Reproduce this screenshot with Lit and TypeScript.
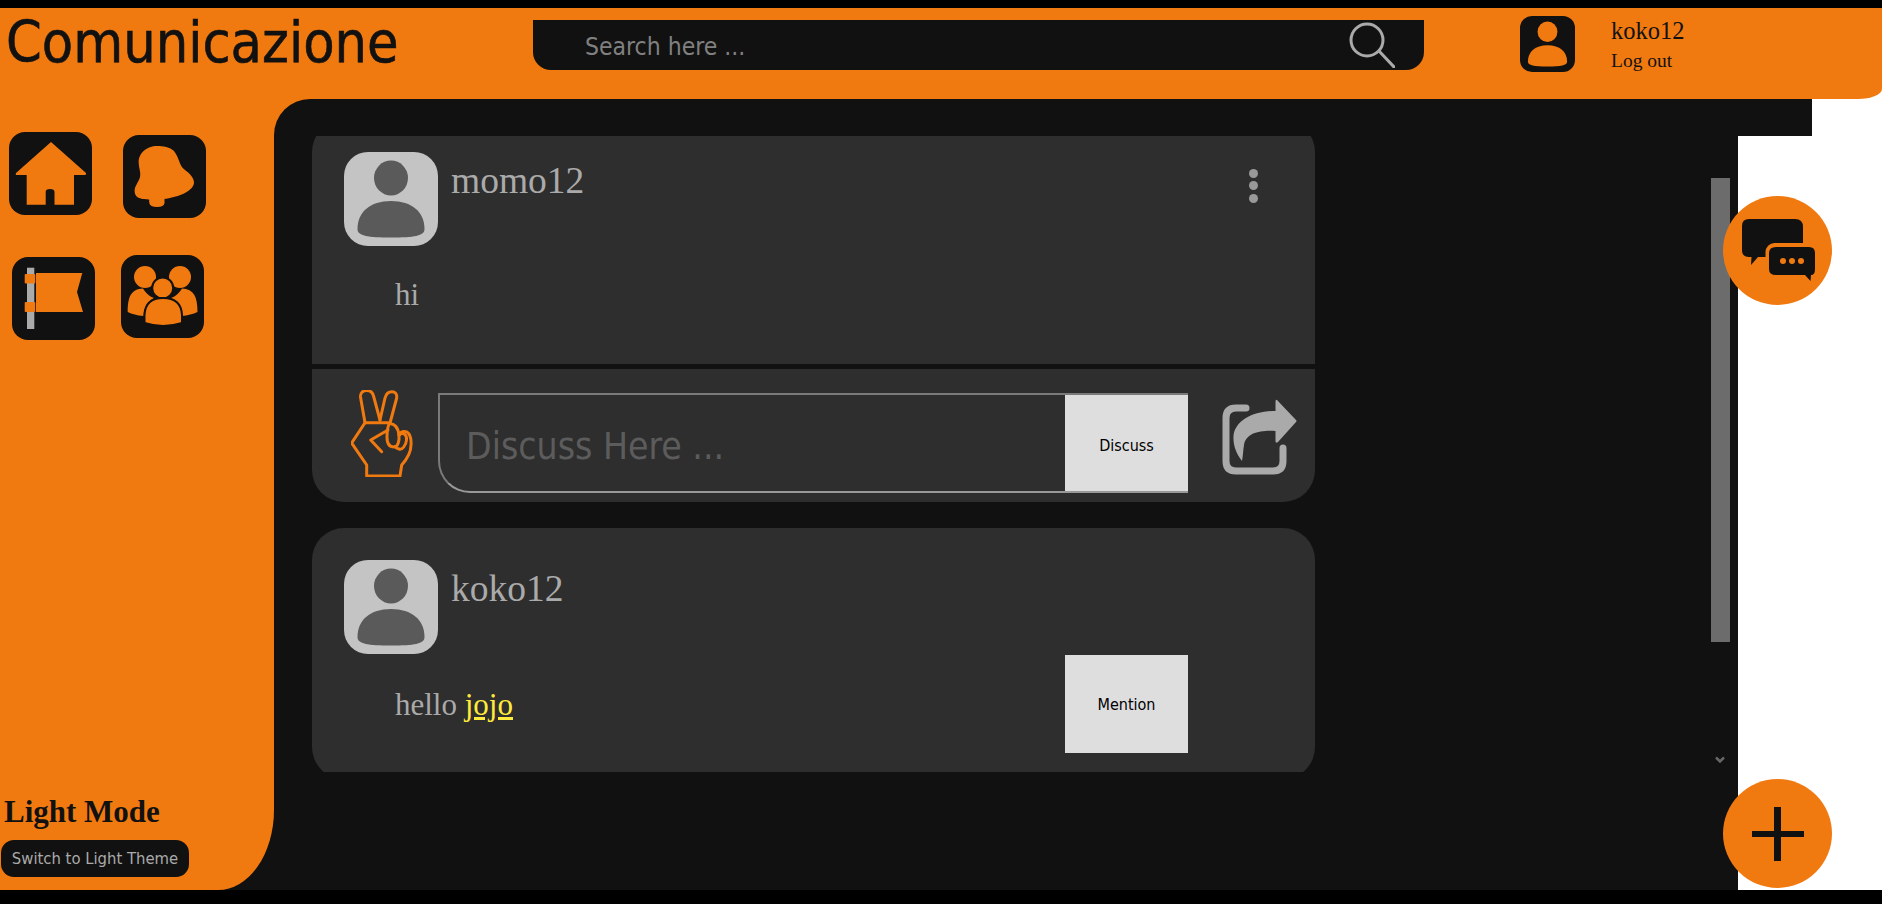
import { LitElement, html, css } from 'lit';
import { customElement } from 'lit/decorators.js';

const person = html`<svg class="person" viewBox="0 0 94 94">
  <ellipse cx="47" cy="26" rx="17" ry="17.5"></ellipse>
  <path d="M13.5 77C13.5 60 26 49 47 49S80.5 60 80.5 77C80.5 84 70 85.5 47 85.5S13.5 84 13.5 77Z"></path>
</svg>`;

const navIcons = {
  home: html`<svg viewBox="0 0 83 83"><path d="M42 10L77 41Q77.500 43 75 43H65V72.700H45.500V60Q45.500 57 41 57T36.700 60V72.700H17.700V43H8Q6 43 7 41Z"></path></svg>`,
  bell: html`<svg viewBox="0 0 83 83">
    <path d="M34 11C24 11 15 18 15.700 28C16 34 18 37 17 42C16 47 11 51 11.700 57C12 62 17 64 21 64C30 65 40 64.500 47 63C57 61 70 56 71 48C71.500 43 66 38 62 35C56 31 57 24 51 16C47 12 40 11 34 11Z"></path>
    <path d="M26 63H41.500V68Q41 72 34 72T26.300 68Z"></path>
  </svg>`,
  flag: html`<svg viewBox="0 0 83 83">
    <rect class="pole" x="15" y="10.700" width="7.300" height="61.300"></rect>
    <path d="M24 16H70.300L65 35L71 55H24Z"></path>
    <rect x="12.700" y="17" width="10.600" height="9.500" rx="1"></rect>
    <rect x="12.700" y="45" width="10.600" height="10" rx="1"></rect>
  </svg>`,
  group: html`<svg viewBox="0 0 83 83">
    <circle cx="24" cy="22" r="11"></circle>
    <circle cx="59" cy="22" r="11"></circle>
    <path d="M6.700 57C6.700 42 10 34 22 33.500C26 40 30 42 33 43C26 47 23 52 22.500 61C16 60.500 11 59 6.700 57Z"></path>
    <path d="M76.500 57C76.500 42 73 34 61 33.500C57 40 53 42 50 43C57 47 60 52 60.500 61C67 60.500 72 59 76.500 57Z"></path>
    <circle class="ring" cx="41.700" cy="33" r="10.500"></circle>
    <path class="ring" d="M23.500 60C24 49 30 43 42 43S60.500 49 61 60V68Q42 74 23.500 68Z"></path>
  </svg>`,
};

const posts = [
  { user: 'momo12', first: true },
  { user: 'koko12', first: false },
];

@customElement('app-root')
export class AppRoot extends LitElement {
  static styles = css`
    :host {
      display: flex;
      flex-direction: column;
      position: relative;
      height: 100vh;
      overflow: hidden;
      background: #fff;
      --orange: #f17a10;
      --dark: #111;
      --card: #2e2e2e;
      --sans: 'DejaVu Sans', sans-serif;
      font-family: 'Liberation Serif', serif;
    }

    :host * {
      box-sizing: border-box;
    }

    .edge-top {
      height: 8px;
      flex: none;
      background: #000;
    }

    .edge-bottom {
      height: 14px;
      flex: none;
      background: #000;
    }

    header {
      height: 91px;
      flex: none;
      display: flex;
      align-items: flex-start;
      padding-left: 6px;
      background: var(--orange);
      border-bottom-right-radius: 24px 10px;
    }

    h1 {
      width: 527px;
      margin: 0;
      font: 400 57px/69px var(--sans);
      font-stretch: condensed;
      -webkit-text-stroke: 0.6px var(--dark);
      color: var(--dark);
    }

    .search {
      width: 891px;
      height: 50px;
      margin-top: 12px;
      display: flex;
      align-items: center;
      padding: 0 29px 0 52px;
      background: var(--dark);
      border-radius: 0 0 18px 18px;
    }

    .search input {
      flex: 1;
      min-width: 0;
      height: 100%;
      border: 0;
      padding: 2px 0 0;
      outline: 0;
      background: none;
      font: 400 24.500px var(--sans);
      font-stretch: condensed;
      color: #aaa;
    }

    .search input::placeholder {
      color: #808080;
      opacity: 1;
    }

    .search svg {
      width: 46px;
      height: 46px;
      fill: none;
      stroke: #aaa;
      stroke-width: 3;
      stroke-linecap: round;
    }

    .me {
      width: 55px;
      height: 56px;
      margin: 8px 0 0 96px;
      border-radius: 12px;
      background: var(--dark);
      fill: var(--orange);
    }

    .person {
      display: block;
      width: 100%;
      height: 100%;
    }

    .who {
      margin: 9px 0 0 36px;
      color: var(--dark);
    }

    .who div {
      font-size: 24.500px;
      line-height: 28px;
    }

    .who a {
      display: block;
      margin-top: 5px;
      font-size: 19.500px;
      line-height: 22px;
    }

    .shell {
      flex: 1;
      min-height: 0;
      display: flex;
    }

    .side-wrap {
      width: 274px;
      flex: none;
      background: var(--dark);
    }

    .side {
      height: 100%;
      display: flex;
      flex-direction: column;
      justify-content: space-between;
      padding: 33px 0 13px 1px;
      background: var(--orange);
      border-bottom-right-radius: 56px 80px;
    }

    nav {
      display: grid;
      grid-template-columns: 83px 83px;
      column-gap: 31px;
      row-gap: 37px;
      padding-left: 8px;
    }

    .tile {
      width: 83px;
      height: 83px;
      border-radius: 16px;
      background: var(--dark);
      fill: var(--orange);
    }

    .tile svg {
      display: block;
    }

    .tile.bell {
      margin-top: 3px;
    }

    .tile.flag {
      margin: 2px 0 0 3px;
    }

    .tile.group {
      margin-left: -2px;
    }

    .pole {
      fill: #aaa;
    }

    .ring {
      stroke: var(--dark);
      stroke-width: 2;
    }

    h2 {
      margin: 0 0 10px 3px;
      font-size: 31px;
      line-height: 36px;
      color: var(--dark);
    }

    .theme {
      display: block;
      width: 188px;
      height: 37px;
      padding: 0;
      border: 0;
      border-radius: 13px;
      background: var(--dark);
      color: #aaa;
      font: 400 16.500px var(--sans);
      font-stretch: condensed;
    }

    .main {
      width: 1464px;
      flex: none;
      display: flex;
      flex-direction: column;
      background: linear-gradient(var(--orange) 37px, var(--dark) 37px);
    }

    .strip {
      width: 1538px;
      height: 37px;
      flex: none;
      background: var(--dark);
      border-top-left-radius: 36px;
    }

    .feed {
      flex: 1;
      min-height: 0;
      display: flex;
      justify-content: space-between;
      padding: 0 8px 0 38px;
      background: var(--dark);
    }

    .cards {
      width: 1003px;
      height: 636px;
      overflow: hidden;
    }

    .card {
      margin-bottom: 26px;
      background: var(--card);
      border-radius: 32px;
      color: #aaa;
    }

    .card:first-child {
      margin-top: -16px;
    }

    .head {
      position: relative;
      display: flex;
      gap: 13px;
      padding: 31.500px 32px 0;
    }

    .card:last-child .head {
      padding-top: 32.500px;
    }

    .avatar {
      width: 94px;
      height: 94px;
      border-radius: 24px;
      background: #c4c4c4;
      fill: #5a5a5a;
    }

    .name {
      margin-top: 7px;
      font-size: 37.500px;
      line-height: 43px;
    }

    .more {
      margin-left: auto;
      margin-right: 25px;
      padding-top: 17px;
      display: flex;
      flex-direction: column;
      gap: 3.500px;
    }

    .more i {
      width: 9px;
      height: 9px;
      border-radius: 50%;
      background: #999;
    }

    .body {
      display: flex;
      justify-content: space-between;
      min-height: 118px;
      padding: 0 127px 0 83px;
      font-size: 31px;
      line-height: 36px;
    }

    .card:last-child .body {
      min-height: 125px;
    }

    .body p {
      margin: 31px 0 0;
    }

    .card:last-child .body p {
      margin-top: 33px;
    }

    .body a {
      color: #ffeb3b;
      text-decoration: underline;
    }

    .square {
      width: 123px;
      flex: none;
      padding: 0;
      border: 0;
      background: #dedede;
      color: #000;
      font: 400 16px var(--sans);
      font-stretch: condensed;
    }

    .body .square {
      height: 98px;
      margin-top: 1px;
    }

    .actions {
      display: flex;
      align-items: flex-start;
      height: 138px;
      padding: 21px 0 0 39px;
      border-top: 5px solid var(--dark);
    }

    .peace {
      width: 62px;
      height: 87px;
      flex: none;
      fill: none;
      stroke: var(--orange);
      stroke-width: 3;
      stroke-linecap: round;
      stroke-linejoin: round;
    }

    .discuss {
      width: 750px;
      height: 100px;
      margin: 3px 0 0 25px;
      flex: none;
      display: flex;
      border: 2px solid #7a7a7a;
      border-bottom-color: #999;
      border-right: 0;
      border-bottom-left-radius: 32px;
    }

    .discuss input {
      flex: 1;
      min-width: 0;
      padding: 8px 0 0 26px;
      border: 0;
      outline: 0;
      background: none;
      color: #aaa;
      font: 400 37px var(--sans);
      font-stretch: condensed;
    }

    .discuss input::placeholder {
      color: #5c5c5c;
      opacity: 1;
    }

    .discuss .square {
      padding-top: 6px;
    }

    .share {
      width: 75px;
      height: 76px;
      flex: none;
      margin: 9px 0 0 34px;
    }

    .share .arrow {
      fill: #aaa;
    }

    .share .frame {
      fill: none;
      stroke: #aaa;
      stroke-width: 7;
      stroke-linecap: round;
    }

    .rail {
      width: 19px;
      flex: none;
      padding-top: 42px;
    }

    .thumb {
      height: 464px;
      background: #6c6c6c;
    }

    .chevron {
      display: block;
      width: 10px;
      height: 8px;
      margin: 114px 0 0 4px;
      fill: none;
      stroke: #666;
      stroke-width: 2.500;
    }

    .fab {
      position: absolute;
      right: 50px;
      width: 109px;
      height: 109px;
      padding: 0;
      border: 0;
      border-radius: 50%;
      background: var(--orange);
    }

    .fab.chat {
      top: 196px;
    }

    .fab.add {
      top: 779px;
    }

    .fab svg {
      display: block;
    }
  `;

  renderPost(post: { user: string; first: boolean }) {
    return html`
      <article class="card">
        <div class="head">
          <div class="avatar">${person}</div>
          <div class="name">${post.user}</div>
          ${post.first ? html`<div class="more"><i></i><i></i><i></i></div>` : ''}
        </div>
        ${post.first
          ? html`
              <div class="body"><p>hi</p></div>
              <div class="actions">
                <svg class="peace" viewBox="0 0 62 87">
                  <path d="M14 32.700L9.500 7C9 3 12 .500 15.700 .500S22 3 22.800 7L29 30"></path>
                  <path d="M29 30L34 8C35 4 38 1.700 41 1.700S46.500 4 45.700 8L39 33"></path>
                  <path d="M14 32.700H39"></path>
                  <path d="M14 32.700L.700 53L15.700 75V86H49L50.700 75C56 69 60 63 60 55C60.500 49 59 42 54 41.500C51 41 49 43 48 45"></path>
                  <path d="M38 34C43 33 47 37 48 45C48.500 51 47 57 43 57C38 57 36 53 36 47C36 43 36 39 38 34Z"></path>
                  <path d="M48 45C52 42 56 44 55.500 50C55 56 51 60 48 59C46 58.500 45 58 44 56.500"></path>
                  <path d="M37 40L19.700 50L30.700 61.700"></path>
                </svg>
                <div class="discuss">
                  <input placeholder="Discuss Here ..." />
                  <button class="square">Discuss</button>
                </div>
                <svg class="share" viewBox="0 0 75 76">
                  <path class="arrow" d="M55 1L74 21Q75 22 74 23L56 43Q53.500 45 53.500 42V32C38 31 24 34 22 46C21 52 21 57 20 62C14 54 11 46 11.500 37C13 22 30 12 53.500 12V3Q53.500 0 55 1Z"></path>
                  <path class="frame" d="M24 9H14Q4 9 4 19V62Q4 72 14 72H51Q61 72 61 62V49"></path>
                </svg>
              </div>
            `
          : html`
              <div class="body">
                <p>hello <a href="#">jojo</a></p>
                <button class="square">Mention</button>
              </div>
            `}
      </article>
    `;
  }

  render() {
    return html`
      <div class="edge-top"></div>
      <header>
        <h1>Comunicazione</h1>
        <div class="search">
          <input placeholder="Search here ..." />
          <svg viewBox="0 0 46 46">
            <circle cx="18" cy="18" r="16"></circle>
            <path d="M30 29L45 45"></path>
          </svg>
        </div>
        <div class="me">${person}</div>
        <div class="who">
          <div>koko12</div>
          <a>Log out</a>
        </div>
      </header>
      <div class="shell">
        <div class="side-wrap">
          <aside class="side">
            <nav>
              <div class="tile home">${navIcons.home}</div>
              <div class="tile bell">${navIcons.bell}</div>
              <div class="tile flag">${navIcons.flag}</div>
              <div class="tile group">${navIcons.group}</div>
            </nav>
            <div>
              <h2>Light Mode</h2>
              <button class="theme">Switch to Light Theme</button>
            </div>
          </aside>
        </div>
        <main class="main">
          <div class="strip"></div>
          <div class="feed">
            <div class="cards">${posts.map((p) => this.renderPost(p))}</div>
            <div class="rail">
              <div class="thumb"></div>
              <svg class="chevron" viewBox="0 0 10 8"><path d="M1 1.500L5 5.500L9 1.500"></path></svg>
            </div>
          </div>
        </main>
      </div>
      <div class="edge-bottom"></div>
      <button class="fab chat">
        <svg width="109" height="109" viewBox="0 0 109 109">
          <path fill="#111" d="M26 23H72Q80 23 80 31V55Q80 61 74 61H35L28 69L28.500 61H26Q19 61 19 54V30Q19 23 26 23Z"></path>
          <rect x="42.500" y="47" width="50" height="36" rx="9" fill="#f17a10"></rect>
          <path fill="#111" d="M53 51H86Q92 51 92 57V73Q92 79 88 79L87.500 85L82 79H53Q46 79 46 73V57Q46 51 53 51Z"></path>
          <circle cx="60" cy="65" r="3" fill="#f17a10"></circle>
          <circle cx="69" cy="65" r="3" fill="#f17a10"></circle>
          <circle cx="78" cy="65" r="3" fill="#f17a10"></circle>
        </svg>
      </button>
      <button class="fab add">
        <svg width="109" height="109" viewBox="0 0 109 109">
          <path fill="#111" d="M51 28H58V52H81V58H58V82H51V58H29V52H51Z"></path>
        </svg>
      </button>
    `;
  }
}
